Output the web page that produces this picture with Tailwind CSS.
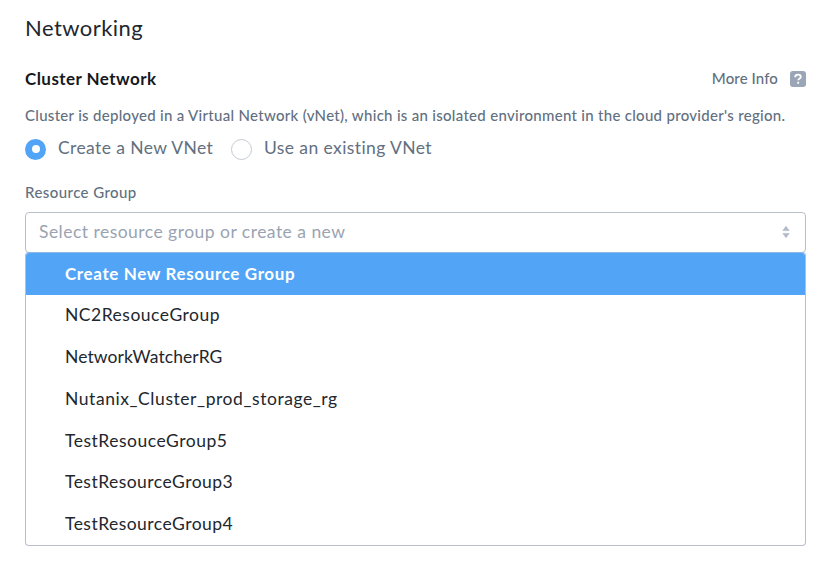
<!DOCTYPE html>
<html lang="en">
<head>
<meta charset="utf-8">
<title>Networking</title>
<script src="https://cdn.jsdelivr.net/npm/@tailwindcss/browser@4"></script>
</head>
<body class="bg-white font-['Lato',sans-serif] text-[#22272e]">
<main class="w-[835px] h-[581px] pl-[25px] pr-[29px] pt-3 overflow-hidden whitespace-nowrap">
  <h1 class="h-8 leading-8 text-[22px] tracking-[0.45px]">Networking</h1>
  <section>
    <header class="mt-[23px] h-6 flex items-center justify-between">
      <h2 class="text-[17px] leading-6 font-bold tracking-[0.45px] text-[#15181d]">Cluster Network</h2>
      <a class="flex items-center gap-3 text-[15px] font-medium tracking-[0.1px] text-[#627080]"><span class="pb-0.5">More Info</span>
        <svg class="w-4 h-4" viewBox="0 0 16 16"><rect width="16" height="16" rx="3" fill="#9aa5b5"/><path d="M5.2 6.2C5.2 4.4 6.4 3.7 8 3.7s2.8.8 2.8 2.2c0 1.6-2.5 1.6-2.5 3.4M8.2 10.8v2" fill="none" stroke="#fff" stroke-width="1.8"/></svg>
      </a>
    </header>
    <p class="mt-[14px] h-5 leading-5 text-[15px] font-medium tracking-[0.295px] text-[#627080]">Cluster is deployed in a Virtual Network (vNet), which is an isolated environment in the cloud provider's region.</p>
    <div class="mt-[13px] h-[22px] flex items-center text-[17.5px] tracking-[0.4px] text-[#627080]">
      <label class="w-[206px] flex items-center gap-3"><span class="w-[21px] h-[21px] rounded-full bg-[#52a4f7] flex items-center justify-center"><span class="w-2 h-2 rounded-full bg-white"></span></span><span class="pb-px">Create a New VNet</span></label>
      <label class="flex items-center gap-3"><span class="w-[21px] h-[21px] rounded-full border border-[#c4cad2]"></span><span class="pb-px">Use an existing VNet</span></label>
    </div>
    <h3 class="mt-[22px] h-5 leading-5 text-[15px] font-medium tracking-[0.43px] text-[#627080]">Resource Group</h3>
    <div class="mt-[10px] w-[781px] h-[41px] border border-[#b8bfca] rounded-[4px] flex items-center justify-between pl-[13px] pr-[15px] pb-px text-[17.5px] tracking-[0.47px] text-[#9aa3b2]">
      <span>Select resource group or create a new</span>
      <svg class="w-2 h-3" viewBox="0 0 8 12"><path d="M4 .2 7.2 4.6H.8ZM4 11.8.8 7.4h6.4Z" fill="#b2bac6" stroke="#b2bac6" stroke-width=".6" stroke-linejoin="round"/></svg>
    </div>
    <ul class="-mt-px w-[781px] h-[294px] border border-t-[#8fb8e5] border-[#b8bfca] rounded-[4px] overflow-hidden text-[17.5px] tracking-[0.5px] flex flex-col">
      <li class="flex-1 pl-[39px] flex items-center bg-[#52a4f7] text-white text-[17px] tracking-[0.63px] font-bold"><span>Create New Resource Group</span></li>
      <li class="flex-1 pl-[39px] flex items-center"><span>NC2ResouceGroup</span></li>
      <li class="flex-1 pl-[39px] flex items-center tracking-[0.08px]"><span>NetworkWatcherRG</span></li>
      <li class="flex-1 pl-[39px] flex items-center tracking-[0.56px]"><span>Nutanix_Cluster_prod_storage_rg</span></li>
      <li class="flex-1 pl-[39px] flex items-center"><span>TestResouceGroup5</span></li>
      <li class="flex-1 pl-[39px] flex items-center tracking-[0.46px]"><span>TestResourceGroup3</span></li>
      <li class="flex-1 pl-[39px] flex items-center tracking-[0.46px]"><span>TestResourceGroup4</span></li>
    </ul>
  </section>
</main>
</body>
</html>
